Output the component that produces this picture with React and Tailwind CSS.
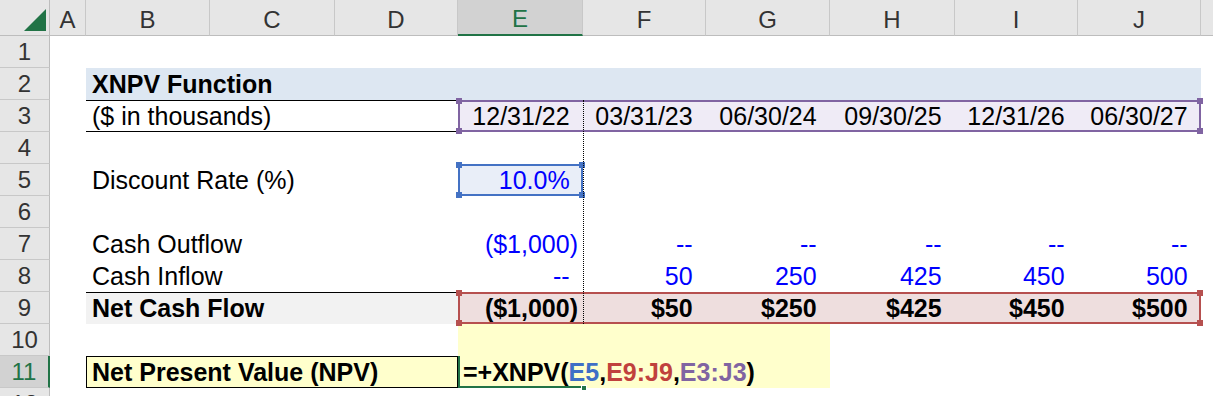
const letters = [
  { l: "A", c: "col-start-2" },
  { l: "B", c: "col-start-3" },
  { l: "C", c: "col-start-4" },
  { l: "D", c: "col-start-5" },
  { l: "E", c: "col-start-6", sel: true },
  { l: "F", c: "col-start-7" },
  { l: "G", c: "col-start-8" },
  { l: "H", c: "col-start-9" },
  { l: "I", c: "col-start-10" },
  { l: "J", c: "col-start-11" },
];

const rowHeads = [
  { n: 1, r: "row-start-2" },
  { n: 2, r: "row-start-3" },
  { n: 3, r: "row-start-4" },
  { n: 4, r: "row-start-5" },
  { n: 5, r: "row-start-6" },
  { n: 6, r: "row-start-7" },
  { n: 7, r: "row-start-8" },
  { n: 8, r: "row-start-9" },
  { n: 9, r: "row-start-10" },
  { n: 10, r: "row-start-11" },
  { n: 11, r: "row-start-12", sel: true },
  { n: 12, r: "row-start-13" },
];

const valCols = ["col-start-6", "col-start-7", "col-start-8", "col-start-9", "col-start-10", "col-start-11"];

const dates = ["12/31/22", "03/31/23", "06/30/24", "09/30/25", "12/31/26", "06/30/27"];
const outflow = ["($1,000)", "--", "--", "--", "--", "--"];
const inflow = ["--", "50", "250", "425", "450", "500"];
const net = ["($1,000)", "$50", "$250", "$425", "$450", "$500"];

// Excel-style number cell: right aligned, with room kept for a closing paren
function Num({ col, row, value, className = "" }) {
  const paren = value.endsWith(")");
  return (
    <div className={`${col} ${row} relative flex justify-end pr-[5px] leading-[32px] whitespace-nowrap ${className}`}>
      <span>{value}</span>
      {!paren && <span className="invisible">)</span>}
    </div>
  );
}

function Handles({ color }) {
  return (
    <>
      <span className={`absolute left-[-4px] top-[-4px] w-[6px] h-[6px] ${color}`} />
      <span className={`absolute right-[-4px] top-[-4px] w-[6px] h-[6px] ${color}`} />
      <span className={`absolute left-[-4px] bottom-[-4px] w-[6px] h-[6px] ${color}`} />
      <span className={`absolute right-[-4px] bottom-[-4px] w-[6px] h-[6px] ${color}`} />
    </>
  );
}

const App = () => {
  return (
    <div className="w-[1213px] h-[396px] overflow-hidden bg-white text-black text-[25px] font-['Liberation_Sans',_Arial,_sans-serif] grid grid-cols-[50px_36px_124px_125px_123px_125px_123px_124px_125px_123px_123px_1fr] grid-rows-[36px_repeat(11,32px)_1fr]">
      {/* Corner */}
      <div className="col-start-1 row-start-1 flex items-end justify-end pr-[3px] pb-[4px] bg-[#e6e6e6] border-r border-b border-[#bdbdbd]">
        <svg width="22" height="22" viewBox="0 0 22 22">
          <polygon points="0,22 22,22 22,0" fill="#217346" />
        </svg>
      </div>

      {/* Column headers */}
      {letters.map((h) =>
        h.sel ? (
          <div
            key={h.l}
            className={`${h.c} row-start-1 flex items-center justify-center pt-[4px] text-[24px] bg-[#d2d2d2] text-[#217346] border-r border-[#c8c8c8] border-b-2 border-b-[#217346]`}
          >
            {h.l}
          </div>
        ) : (
          <div
            key={h.l}
            className={`${h.c} row-start-1 flex items-center justify-center pt-[4px] text-[24px] bg-[#e6e6e6] text-[#333333] border-r border-[#c8c8c8] border-b border-b-[#bdbdbd]`}
          >
            {h.l}
          </div>
        )
      )}
      <div className="col-start-12 row-start-1 bg-[#e6e6e6] border-b border-[#bdbdbd]" />

      {/* Row headers */}
      {rowHeads.map((h) =>
        h.sel ? (
          <div
            key={h.n}
            className={`col-start-1 ${h.r} flex justify-center leading-[32px] text-[24px] bg-[#d2d2d2] text-[#217346] border-b border-[#c8c8c8] border-r-2 border-r-[#217346]`}
          >
            {h.n}
          </div>
        ) : (
          <div
            key={h.n}
            className={`col-start-1 ${h.r} flex justify-center leading-[32px] text-[24px] bg-[#e6e6e6] text-[#333333] border-b border-[#c8c8c8] border-r border-r-[#bdbdbd]`}
          >
            {h.n}
          </div>
        )
      )}

      {/* Fills and borders */}
      <div className="col-start-3 col-end-12 row-start-3 bg-[#dde7f2]" />
      <div className="col-start-3 col-end-6 row-start-4 border-y border-black" />
      <div className="col-start-6 col-end-12 row-start-4 relative bg-[#efebf6] border-2 border-[#8064a2]">
        <Handles color="bg-[#8064a2]" />
      </div>
      <div className="col-start-6 row-start-6 relative bg-[#e9eef8] border-2 border-[#4472c4]">
        <Handles color="bg-[#4472c4]" />
      </div>
      <div className="col-start-3 col-end-6 row-start-10 bg-[#f2f2f2] border-t border-black" />
      <div className="col-start-6 col-end-12 row-start-10 relative bg-[#eedede] border-2 border-[#b6504f]">
        <Handles color="bg-[#b6504f]" />
      </div>
      <div className="col-start-6 col-end-9 row-start-11 row-end-13 bg-[#ffffcc]" />
      <div className="col-start-3 col-end-6 row-start-12 bg-[#ffffcc] border border-black" />
      <div className="col-start-6 row-start-12 relative border-l-2 border-b-2 border-[#217346]">
        <span className="absolute right-[-4px] bottom-[-5px] w-[6px] h-[6px] bg-[#217346] border border-white" />
      </div>

      {/* Page break */}
      <div className="col-start-7 row-start-4 row-end-11 relative border-l border-dotted border-black" />

      {/* Labels */}
      <div className="col-start-3 col-end-6 row-start-3 relative pl-[6px] leading-[32px] font-bold whitespace-nowrap">XNPV Function</div>
      <div className="col-start-3 col-end-6 row-start-4 relative pl-[6px] leading-[32px] whitespace-nowrap">($ in thousands)</div>
      <div className="col-start-3 col-end-6 row-start-6 relative pl-[6px] leading-[32px] whitespace-nowrap">Discount Rate (%)</div>
      <div className="col-start-3 col-end-6 row-start-8 relative pl-[6px] leading-[32px] whitespace-nowrap">Cash Outflow</div>
      <div className="col-start-3 col-end-6 row-start-9 relative pl-[6px] leading-[32px] whitespace-nowrap">Cash Inflow</div>
      <div className="col-start-3 col-end-6 row-start-10 relative pl-[6px] leading-[32px] font-bold whitespace-nowrap">Net Cash Flow</div>
      <div className="col-start-3 col-end-6 row-start-12 relative pl-[6px] leading-[32px] font-bold whitespace-nowrap">Net Present Value (NPV)</div>

      {/* Values */}
      {dates.map((v, i) => (
        <Num key={"d" + i} col={valCols[i]} row="row-start-4" value={v} />
      ))}
      <Num col="col-start-6" row="row-start-6" value="10.0%" className="text-[#0000ff]" />
      {outflow.map((v, i) => (
        <Num key={"o" + i} col={valCols[i]} row="row-start-8" value={v} className="text-[#0000ff]" />
      ))}
      {inflow.map((v, i) => (
        <Num key={"i" + i} col={valCols[i]} row="row-start-9" value={v} className="text-[#0000ff]" />
      ))}
      {net.map((v, i) => (
        <Num key={"n" + i} col={valCols[i]} row="row-start-10" value={v} className="font-bold" />
      ))}

      {/* Formula being edited */}
      <div className="col-start-6 col-end-9 row-start-12 relative pl-[5px] leading-[32px] font-bold whitespace-nowrap">
        =+XNPV(<span className="text-[#3f6fc6]">E5</span>,<span className="text-[#c0413d]">E9:J9</span>,
        <span className="text-[#8064a2]">E3:J3</span>)
      </div>
    </div>
  );
};

export default App;
